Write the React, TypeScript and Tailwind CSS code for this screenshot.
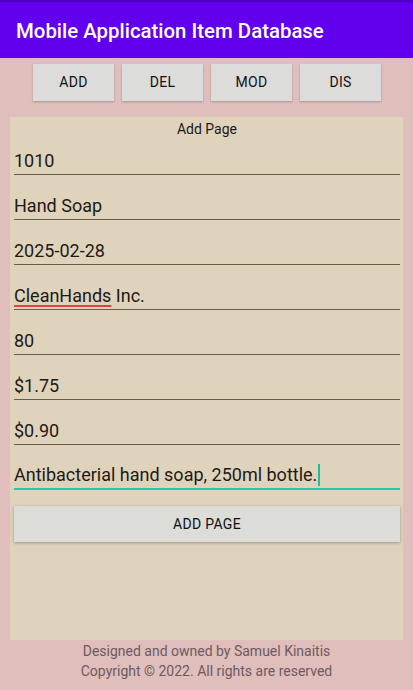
import { useState } from 'react';

const fields = [
  '1010',
  'Hand Soap',
  '2025-02-28',
  'CleanHands Inc.',
  '80',
  '$1.75',
  '$0.90',
];

export default function App() {
  const [active] = useState(7);
  const font = { fontFamily: 'Roboto, "Noto Sans", sans-serif' };

  return (
    <div className="w-[413px] h-[690px] bg-[#dfbebc] flex flex-col" style={font}>
      {/* App bar */}
      <div className="h-[58px] bg-[#6200ee] flex items-center px-4 border-t-2 border-[#4b00c4]">
        <h1 className="text-white text-[20.4px] font-medium leading-none pt-[2px]">
          Mobile Application Item Database
        </h1>
      </div>

      {/* Top buttons */}
      <div className="flex justify-center gap-2 pt-[6px] pl-[1px]">
        {['ADD', 'DEL', 'MOD', 'DIS'].map((label) => (
          <button
            key={label}
            className="w-[81px] h-[37px] bg-[#dcdcdb] text-[#111111] text-[14px] font-normal tracking-[0.3px] shadow-[0_1px_2px_rgba(0,0,0,0.25)]"
          >
            {label}
          </button>
        ))}
      </div>

      {/* Panel */}
      <div className="mx-[10px] mt-[16px] h-[523px] bg-[#e0d3bc] pl-1 pr-[3px] flex flex-col">
        <p className="text-center text-[14px] text-[#1a1a1a] pt-[2px] leading-5">Add Page</p>

        {fields.map((v, i) => (
          <div key={i} className={`${i === 0 ? 'h-[36px]' : 'h-[45px]'} flex flex-col justify-end`}>
            <div className="text-[18px] text-[#1e1a16] leading-6 pb-[1px]">
              {i === 3 ? (
                <>
                  <span className="underline decoration-[#e0413a] decoration-[1.5px] underline-offset-[3px]">
                    CleanHands
                  </span>{' '}
                  Inc.
                </>
              ) : (
                v
              )}
            </div>
            <div className="h-[1.5px] bg-[#695c4c]" />
          </div>
        ))}

        <div className="h-[45px] flex flex-col justify-end">
          <div className="text-[18px] text-[#1e1a16] leading-6 pb-[1px] flex items-center">
            Antibacterial hand soap, 250ml bottle.
            {active === 7 && <span className="inline-block w-[2px] h-[22px] bg-[#1fbd9c] ml-[1px]" />}
          </div>
          <div className="h-[2px] bg-[#2bc4a6]" />
        </div>

        <button className="mt-[16px] h-[36px] w-full bg-[#dcdcd9] text-[#111111] text-[14px] font-normal tracking-[0.3px] shadow-[0_1px_3px_rgba(0,0,0,0.3)]">
          ADD PAGE
        </button>
      </div>

      {/* Footer */}
      <div className="flex flex-col items-center pt-[1px] text-[14px] text-[#6e5a5c] leading-5">
        <p>Designed and owned by Samuel Kinaitis</p>
        <p>Copyright © 2022. All rights are reserved</p>
      </div>
    </div>
  );
}
